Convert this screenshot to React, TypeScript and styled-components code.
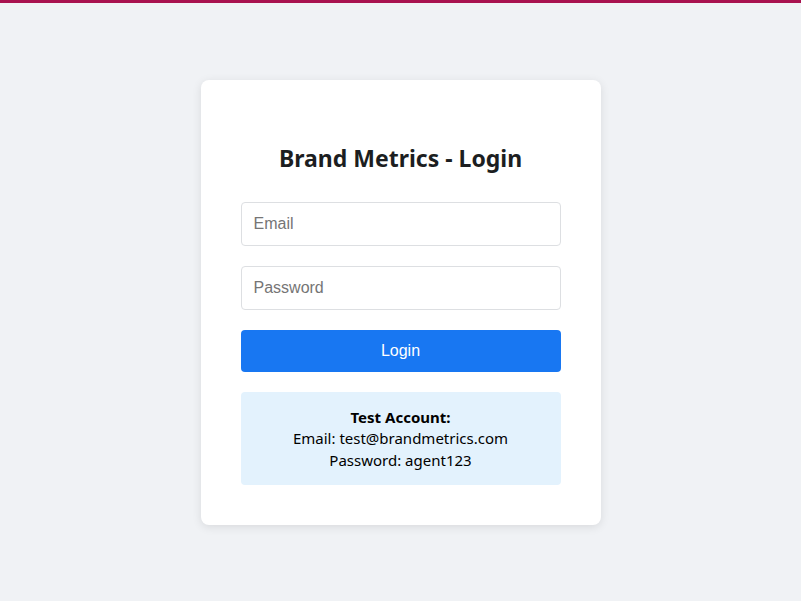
import React from "react";
import styled, { createGlobalStyle } from "styled-components";

const Global = createGlobalStyle`
  html, body { margin: 0; padding: 0; }
  body {
    background: #f0f2f5;
    font-family: "Noto Sans", "Open Sans", sans-serif;
    border-top: 3px solid #a8124f;
    min-height: 598px;
  }
  * { box-sizing: border-box; }
`;

const Page = styled.div`
  display: flex;
  justify-content: center;
  padding-top: 77px;
`;

const Card = styled.div`
  width: 400px;
  background: #ffffff;
  border-radius: 8px;
  box-shadow: 0 2px 10px rgba(0, 0, 0, 0.1);
  padding: 40px;
  display: flex;
  flex-direction: column;
`;

const Title = styled.h2`
  margin: 22px 0 28px;
  font-size: 23px;
  line-height: 32px;
  font-weight: 700;
  color: #1c1e21;
  text-align: center;
`;

const Input = styled.input`
  height: 44px;
  padding: 0 12px;
  border: 1px solid #dddfe2;
  border-radius: 4px;
  font-family: "Liberation Sans", Arial, sans-serif;
  font-size: 16px;
  color: #1c1e21;
  margin-bottom: 20px;
  outline: none;
  &::placeholder { color: #757575; }
`;

const Button = styled.button`
  height: 42px;
  border: none;
  border-radius: 4px;
  background: #1877f2;
  color: #ffffff;
  font-family: "Liberation Sans", Arial, sans-serif;
  font-size: 16px;
  cursor: pointer;
`;

const InfoBox = styled.div`
  margin-top: 20px;
  background: #e3f2fd;
  border-radius: 4px;
  padding: 15px 15px 14px;
  text-align: center;
  font-size: 15px;
  line-height: 21.3px;
  color: #000;
`;

const Strong = styled.div`
  font-weight: 700;
`;

export default function App() {
  return (
    <>
      <Global />
      <Page>
        <Card>
          <Title>Brand Metrics - Login</Title>
          <Input type="email" placeholder="Email" />
          <Input type="password" placeholder="Password" />
          <Button>Login</Button>
          <InfoBox>
            <Strong>Test Account:</Strong>
            <div>Email: test@brandmetrics.com</div>
            <div>Password: agent123</div>
          </InfoBox>
        </Card>
      </Page>
    </>
  );
}
